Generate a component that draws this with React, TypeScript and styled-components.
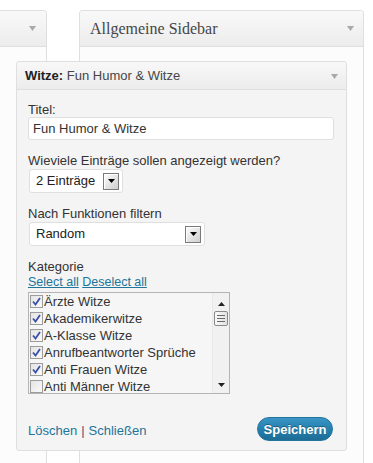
import styled, { createGlobalStyle } from 'styled-components';

const GlobalStyle = createGlobalStyle`
  html, body {
    margin: 0;
    padding: 0;
    background: #ffffff;
    overflow: hidden;
  }
  body {
    font-family: 'Liberation Sans', Arial, sans-serif;
    font-size: 13px;
    color: #333333;
  }
`;

type Category = { name: string; checked: boolean };

const categories: Category[] = [
  { name: 'Ärzte Witze', checked: true },
  { name: 'Akademikerwitze', checked: true },
  { name: 'A-Klasse Witze', checked: true },
  { name: 'Anrufbeantworter Sprüche', checked: true },
  { name: 'Anti Frauen Witze', checked: true },
  { name: 'Anti Männer Witze', checked: false },
];

function Arrow({ color = '#a9a9a9' }: { color?: string }) {
  return (
    <svg width='7' height='5' viewBox='0 0 7 5'>
      <polygon points='0,0 7,0 3.5,5' fill={color} />
    </svg>
  );
}

function SelectBox({ value, width }: { value: string; width: number }) {
  return (
    <Select $width={width}>
      <SelectValue>{value}</SelectValue>
      <SelectButton>
        <svg width='7' height='4' viewBox='0 0 7 4'>
          <polygon points='0,0 7,0 3.5,4' fill='#000' />
        </svg>
      </SelectButton>
    </Select>
  );
}

export default function App() {
  return (
    <>
      <GlobalStyle />
      <Page>
        <Panel $width={287} $offset={-240}>
          <PanelHeader $arrowRight={10}>
            <span />
            <Arrow />
          </PanelHeader>
        </Panel>
        <Panel $width={285} $offset={0}>
          <PanelHeader $arrowRight={9}>
            <PanelTitle>Allgemeine Sidebar</PanelTitle>
            <Arrow />
          </PanelHeader>
        </Panel>

        <Widget>
          <WidgetHeader>
            <WidgetTitle>
              <b>Witze:</b> Fun Humor &amp; Witze
            </WidgetTitle>
            <Arrow />
          </WidgetHeader>
          <WidgetBody>
            <Field>
              <Label>Titel:</Label>
              <TextInput>Fun Humor &amp; Witze</TextInput>
            </Field>
            <Field>
              <Label>Wieviele Einträge sollen angezeigt werden?</Label>
              <SelectBox value='2 Einträge' width={94} />
            </Field>
            <Field>
              <Label>Nach Funktionen filtern</Label>
              <SelectBox value='Random' width={176} />
            </Field>
            <Field>
              <Label>Kategorie</Label>
              <SelectLinks>
                <Link href='#'>Select all</Link> <Link href='#'>Deselect all</Link>
              </SelectLinks>
              <ListBox>
                <ListItems>
                  {categories.map((c) => (
                    <ListRow key={c.name}>
                      <Check>
                        {c.checked && (
                          <svg width='9' height='9' viewBox='0 0 9 9'>
                            <path d='M1 4.5 L3.5 7.5 L8 1' stroke='#3b4fa8' strokeWidth='1.8' fill='none' />
                          </svg>
                        )}
                      </Check>
                      {c.name}
                    </ListRow>
                  ))}
                </ListItems>
                <ScrollBar>
                  <svg width='7' height='4' viewBox='0 0 7 4'>
                    <polygon points='3.5,0 7,4 0,4' fill='#222' />
                  </svg>
                  <Thumb>
                    <Grip />
                    <Grip />
                    <Grip />
                  </Thumb>
                  <ScrollSpacer />
                  <svg width='7' height='4' viewBox='0 0 7 4'>
                    <polygon points='0,0 7,0 3.5,4' fill='#222' />
                  </svg>
                </ScrollBar>
              </ListBox>
            </Field>
            <Footer>
              <FooterLinks>
                <FooterLink href='#'>Löschen</FooterLink>
                <Separator>|</Separator>
                <FooterLink href='#'>Schließen</FooterLink>
              </FooterLinks>
              <SaveButton type='button'>Speichern</SaveButton>
            </Footer>
          </WidgetBody>
        </Widget>
      </Page>
    </>
  );
}

const Page = styled.div`
  position: relative;
  display: flex;
  gap: 32px;
  padding-top: 10px;
  height: 463px;
  box-sizing: border-box;
  overflow: hidden;
`;

const Panel = styled.div<{ $width: number; $offset: number }>`
  flex: 0 0 ${(p) => p.$width}px;
  margin-left: ${(p) => p.$offset}px;
  height: 453px;
  box-sizing: border-box;
  border: 1px solid #dfdfdf;
  border-bottom: none;
  border-radius: 4px 4px 0 0;
  background: #fcfcfc;
`;

const PanelHeader = styled.div<{ $arrowRight: number }>`
  display: flex;
  align-items: center;
  justify-content: space-between;
  height: 34px;
  padding: 0 ${(p) => p.$arrowRight}px 1px 10px;
  border-bottom: 1px solid #dfdfdf;
  border-radius: 3px 3px 0 0;
  background: linear-gradient(#f9f9f9, #ececec);
`;

const PanelTitle = styled.h3`
  margin: 0;
  padding-top: 2px;
  font-family: 'Liberation Serif', Georgia, serif;
  font-size: 16px;
  font-weight: normal;
  color: #464646;
  line-height: 30px;
`;

const Widget = styled.div`
  position: absolute;
  left: 16px;
  top: 61px;
  width: 331px;
  box-sizing: border-box;
  border: 1px solid #dfdfdf;
  border-radius: 3px;
  background: #f4f4f4;
`;

const WidgetHeader = styled.div`
  display: flex;
  align-items: center;
  justify-content: space-between;
  height: 28px;
  padding: 1px 8px 0 8px;
  box-sizing: border-box;
  border-bottom: 1px solid #dfdfdf;
  border-radius: 3px 3px 0 0;
  background: linear-gradient(#f8f8f8, #ececec);
`;

const WidgetTitle = styled.div`
  font-size: 13px;
  color: #464646;
  line-height: 26px;

  b {
    color: #222222;
  }
`;

const WidgetBody = styled.div`
  padding: 12px 12px 9px 11px;
`;

const Field = styled.div`
  margin-bottom: 13px;
`;

const Label = styled.div`
  line-height: 15px;
  color: #333333;
  margin-bottom: 1px;
`;

const TextInput = styled.div`
  height: 23px;
  margin-top: -1px;
  box-sizing: border-box;
  border: 1px solid #dfdfdf;
  border-radius: 3px;
  background: #ffffff;
  padding: 0 4px;
  line-height: 21px;
  color: #333333;
`;

const Select = styled.div<{ $width: number }>`
  display: flex;
  align-items: center;
  justify-content: space-between;
  width: ${(p) => p.$width}px;
  height: 24px;
  margin-left: 1px;
  box-sizing: border-box;
  border: 1px solid #dfdfdf;
  border-radius: 3px;
  background: #ffffff;
  padding: 0 3px 0 6px;
`;

const SelectValue = styled.span`
  color: #222222;
  line-height: 22px;
`;

const SelectButton = styled.span`
  display: flex;
  align-items: center;
  justify-content: center;
  width: 16px;
  height: 17px;
  box-sizing: border-box;
  border: 1px solid #7a7a7a;
  background: linear-gradient(135deg, #fdfdfd, #cfcfcf);
  box-shadow: inset 1px 1px 0 #ffffff;
`;

const SelectLinks = styled.div`
  font-size: 12.5px;
  line-height: 15px;
  margin-bottom: 2px;
`;

const Link = styled.a`
  color: #21759b;
  text-decoration: underline;
`;

const ListBox = styled.div`
  display: flex;
  width: 202px;
  height: 102px;
  box-sizing: border-box;
  border: 1px solid #b4b4b4;
  background: #f6f6f6;
  overflow: hidden;
`;

const ListItems = styled.div`
  flex: 1;
  padding-left: 1px;
`;

const ListRow = styled.div`
  display: flex;
  align-items: center;
  height: 17px;
  color: #333333;
  white-space: nowrap;
`;

const Check = styled.span`
  display: inline-flex;
  align-items: center;
  justify-content: center;
  width: 13px;
  height: 13px;
  margin-right: 1px;
  box-sizing: border-box;
  border: 1px solid #9c9c9c;
  background: linear-gradient(135deg, #e4e4e4, #fafafa);
`;

const ScrollBar = styled.div`
  display: flex;
  flex-direction: column;
  align-items: center;
  width: 17px;
  padding: 9px 0 6px;
  box-sizing: border-box;
  border-left: 1px solid #e8e8e8;
  background: #f1f1f1;
`;

const Thumb = styled.div`
  display: flex;
  flex-direction: column;
  justify-content: center;
  gap: 2px;
  width: 14px;
  height: 15px;
  margin-top: 5px;
  box-sizing: border-box;
  border: 1px solid #8a8a8a;
  border-radius: 2px;
  background: linear-gradient(90deg, #fafafa, #e2e2e2);
  padding: 0 2px;
`;

const Grip = styled.span`
  display: block;
  height: 1px;
  background: #6a6a6a;
`;

const ScrollSpacer = styled.div`
  flex: 1;
`;

const Footer = styled.div`
  display: flex;
  align-items: center;
  justify-content: space-between;
  margin-top: 23px;
  padding-right: 1px;
`;

const FooterLinks = styled.div`
  display: flex;
  gap: 4px;
  padding-top: 3px;
`;

const FooterLink = styled.a`
  color: #21759b;
  text-decoration: none;
`;

const Separator = styled.span`
  color: #5b4a74;
`;

const SaveButton = styled.button`
  width: 76px;
  height: 24px;
  padding: 0;
  border: 1px solid #21759b;
  border-radius: 12px;
  background: linear-gradient(#3a95c4, #2480ae 50%, #1d6c95);
  color: #ffffff;
  font-family: 'Liberation Sans', Arial, sans-serif;
  font-size: 13px;
  font-weight: bold;
  text-shadow: 0 -1px 0 rgba(0, 0, 0, 0.3);
  cursor: pointer;
`;
